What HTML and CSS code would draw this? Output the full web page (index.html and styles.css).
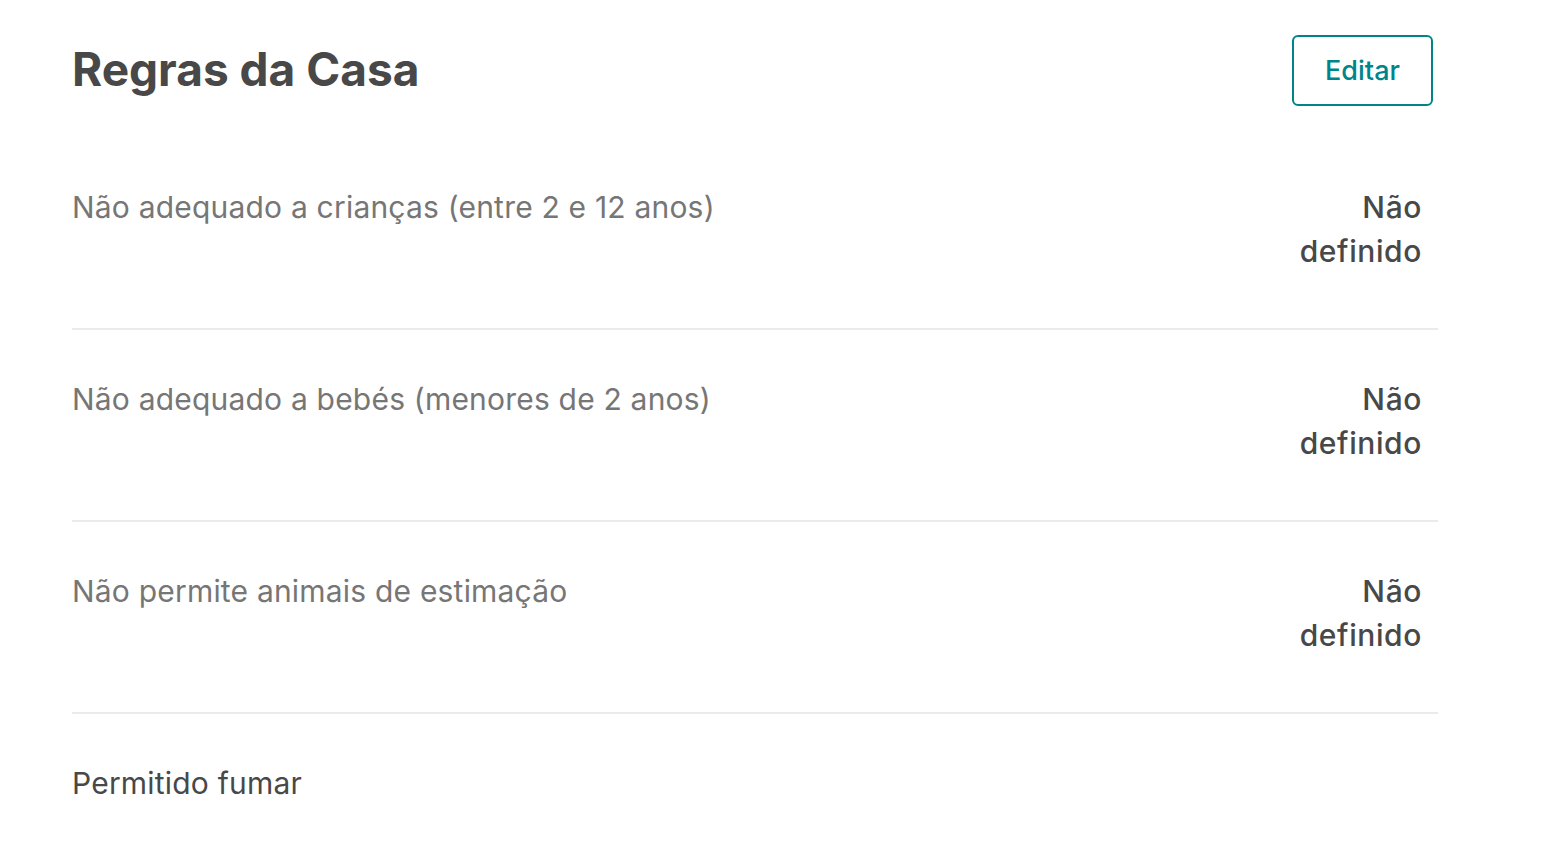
FILE: index.html
```html
<!DOCTYPE html>
<html lang="pt-BR">
<head>
  <meta charset="UTF-8" />
  <meta name="viewport" content="width=device-width, initial-scale=1.0"/>
  <title>Regras da Casa</title>
  <link rel="stylesheet" href="styles.css">
</head>
<body>
  <div class="pagina">
    <div class="cabecalho">
      <h1>Regras da Casa</h1>
      <button class="editar">Editar</button>
    </div>

    <div class="regra">
      <div class="rotulo">Não adequado a crianças (entre 2 e 12 anos)</div>
      <div class="valor">Não definido</div>
    </div>
    <div class="regra">
      <div class="rotulo">Não adequado a bebés (menores de 2 anos)</div>
      <div class="valor">Não definido</div>
    </div>
    <div class="regra">
      <div class="rotulo">Não permite animais de estimação</div>
      <div class="valor">Não definido</div>
    </div>
    <div class="regra">
      <div class="rotulo ativo">Permitido fumar</div>
    </div>
  </div>
</body>
</html>
```

FILE: styles.css
```css
body {
  margin: 0;
  font-family: Inter, "Noto Sans", Arial, sans-serif;
  background: #fff;
  color: #484848;
}
.pagina {
  width: 1366px;
  padding: 35px 0 0 72px;
}
.cabecalho {
  display: flex;
  justify-content: space-between;
  align-items: center;
  margin-bottom: 32px;
}
h1 {
  margin: 0 0 4px;
  font-size: 46px;
  font-weight: 700;
  color: #484848;
}
.editar {
  width: 141px;
  height: 71px;
  margin-right: 5px;
  background: #fff;
  border: 2px solid #008489;
  border-radius: 6px;
  color: #008489;
  font-family: inherit;
  font-size: 27px;
  font-weight: 500;
  cursor: pointer;
}
.regra {
  display: flex;
  justify-content: space-between;
  align-items: flex-start;
  padding: 47px 16px 55px 0;
  border-bottom: 2px solid #ebebeb;
  font-size: 30px;
  line-height: 44px;
  letter-spacing: 0.2px;
}
.regra:last-child {
  border-bottom: none;
}
.rotulo {
  color: #767676;
}
.rotulo.ativo {
  color: #484848;
}
.valor {
  width: 150px;
  text-align: right;
  font-weight: 500;
  letter-spacing: 0.6px;
  color: #484848;
}
```
